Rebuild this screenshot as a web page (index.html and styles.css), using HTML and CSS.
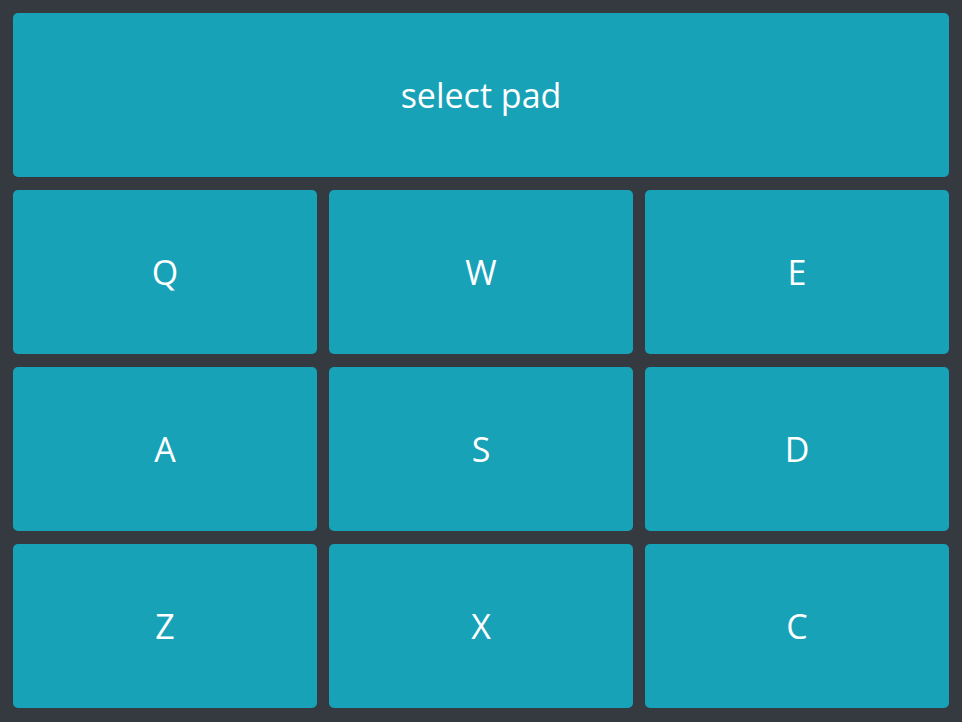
FILE: index.html
```html
<!DOCTYPE html>
<html>
<head>
<meta charset="utf-8">
<link rel="stylesheet" href="styles.css">
</head>
<body>
<div class="pad">
  <button class="key wide">select pad</button>
  <button class="key">Q</button>
  <button class="key">W</button>
  <button class="key">E</button>
  <button class="key">A</button>
  <button class="key">S</button>
  <button class="key">D</button>
  <button class="key">Z</button>
  <button class="key">X</button>
  <button class="key">C</button>
</div>
</body>
</html>
```

FILE: styles.css
```css
html, body {
  margin: 0;
  height: 100%;
  background: #343a40;
}
body {
  padding: 13px 13px 14px 13px;
  box-sizing: border-box;
}
.pad {
  display: grid;
  grid-template-columns: repeat(3, 1fr);
  grid-template-rows: repeat(4, 164px);
  column-gap: 12px;
  row-gap: 13px;
  height: 100%;
}
.key {
  border: none;
  border-radius: 5px;
  background: #17a2b8;
  color: #fff;
  font-family: "Open Sans", "Noto Sans", sans-serif;
  font-size: 34px;
  line-height: 1.2;
  padding: 0;
  margin: 0;
}
.wide {
  grid-column: 1 / 4;
}
```
